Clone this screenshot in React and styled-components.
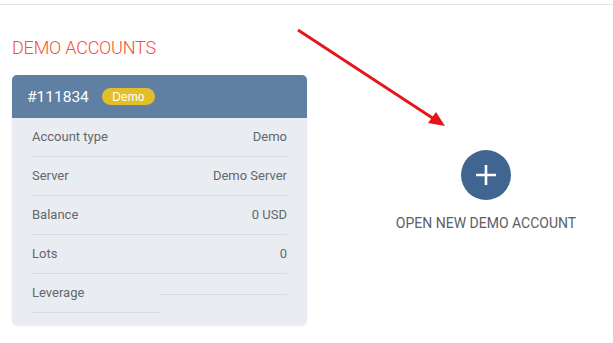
import styled, { createGlobalStyle } from 'styled-components'

const GlobalStyle = createGlobalStyle`
  body {
    margin: 0;
    background: #fff;
    font-family: Roboto, "Liberation Sans", sans-serif;
  }
`

const rows = [
  { label: 'Account type', value: 'Demo' },
  { label: 'Server', value: 'Demo Server' },
  { label: 'Balance', value: '0 USD' },
  { label: 'Lots', value: '0' },
  { label: 'Leverage', value: '' },
]

export default function App() {
  return (
    <Page>
      <GlobalStyle />
      <TopRule />
      <Content>
        <Column>
          <Title>DEMO ACCOUNTS</Title>
          <Card>
            <CardHeader>
              <AccountNo>#111834</AccountNo>
              <Badge>Demo</Badge>
            </CardHeader>
            <CardBody>
              {rows.map(row => (
                <Row key={row.label}>
                  <Label>{row.label}</Label>
                  <Value>{row.value}</Value>
                </Row>
              ))}
            </CardBody>
          </Card>
        </Column>
        <OpenAccount>
          <PlusButton>
            <svg width="22" height="22" viewBox="0 0 22 22">
              <path d="M11 1v20M1 11h20" stroke="#fff" strokeWidth="2.6" />
            </svg>
          </PlusButton>
          <OpenLabel>OPEN NEW DEMO ACCOUNT</OpenLabel>
        </OpenAccount>
      </Content>
      <Arrow width="613" height="343" viewBox="0 0 613 343">
        <line x1="298" y1="30" x2="434" y2="119" stroke="#e8141b" strokeWidth="2.8" />
        <polygon points="445,126 428,123 436,112" fill="#e8141b" />
      </Arrow>
    </Page>
  )
}

const Page = styled.div`
  position: relative;
  width: 613px;
  height: 343px;
  overflow: hidden;
`

const TopRule = styled.div`
  height: 4px;
  border-bottom: 1px solid #e4e4e4;
`

const Content = styled.div`
  display: flex;
  padding: 0 12px;
`

const Column = styled.div`
  width: 295px;
  display: flex;
  flex-direction: column;
`

const Title = styled.h2`
  margin: 32px 0 0;
  font-size: 18px;
  font-weight: 300;
  line-height: 22px;
  color: #ee5336;
  letter-spacing: -0.2px;
`

const Card = styled.div`
  margin-top: 16px;
  border-radius: 5px;
  overflow: hidden;
  background: #e9edf2;
  box-shadow: 0 1px 2px rgba(0, 0, 0, 0.08);
`

const CardHeader = styled.div`
  display: flex;
  align-items: center;
  gap: 13px;
  height: 43px;
  padding: 0 15px;
  background: #5f7fa3;
`

const AccountNo = styled.span`
  font-size: 15.5px;
  color: #fff;
`

const Badge = styled.span`
  display: inline-flex;
  align-items: center;
  justify-content: center;
  width: 53px;
  height: 17px;
  border-radius: 9px;
  background: #e1be2a;
  color: #fff;
  font-size: 12px;
  font-family: "Liberation Sans", Arial, sans-serif;
`

const CardBody = styled.div`
  padding: 0 20px 12px;
`

const Row = styled.div`
  display: flex;
  align-items: flex-start;
  font-size: 13px;
  line-height: 18px;
  color: #63676c;
`

const Label = styled.div`
  width: 128px;
  padding: 10px 0;
  border-bottom: 1px solid #d8dde4;
`

const Value = styled.div`
  flex: 1;
  padding: 10px 0;
  text-align: right;
  border-bottom: 1px solid #d8dde4;
`

const OpenAccount = styled.div`
  margin-left: 79px;
  margin-top: 145px;
  width: 200px;
  display: flex;
  flex-direction: column;
  align-items: center;
`

const PlusButton = styled.div`
  width: 50px;
  height: 50px;
  border-radius: 50%;
  background: #3f6590;
  display: flex;
  align-items: center;
  justify-content: center;
`

const OpenLabel = styled.div`
  margin-top: 15px;
  font-size: 14px;
  color: #5c6066;
  white-space: nowrap;
`

const Arrow = styled.svg`
  position: absolute;
  top: 0;
  left: 0;
  pointer-events: none;
`
